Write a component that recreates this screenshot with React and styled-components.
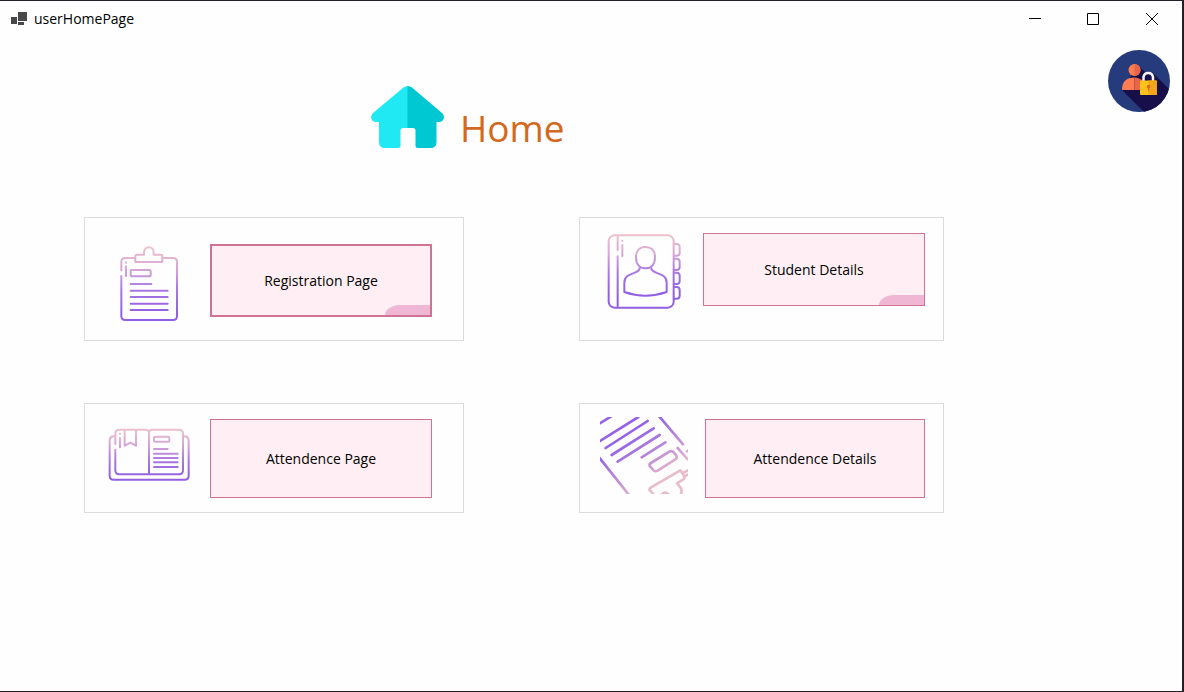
import React from "react";
import styled, { createGlobalStyle } from "styled-components";

const GlobalStyle = createGlobalStyle`
  * { box-sizing: border-box; }
  body {
    margin: 0;
    background: #fefefe;
    font-family: "Open Sans", "Noto Sans", sans-serif;
    color: #000;
  }
`;

const Window = styled.div`
  display: flex;
  flex-direction: column;
  min-height: 100vh;
  background: #fefefe;
  border: solid #232127;
  border-width: 1px 2px 1px 0;
`;

const TitleBar = styled.header`
  display: flex;
  align-items: center;
  height: 36px;
  padding: 0 1px 0 11px;
`;

const TitleText = styled.span`
  flex: 1;
  margin-left: 7px;
  font-size: 14px;
  line-height: 20px;
`;

const CaptionButton = styled.button`
  display: flex;
  align-items: center;
  justify-content: center;
  width: 58px;
  height: 36px;
  padding: 0;
  border: 0;
  background: none;
`;

const Toolbar = styled.div`
  display: flex;
  justify-content: flex-end;
  height: 49px;
  padding: 13px 12px 0 0;
`;

const AccountButton = styled.button`
  width: 62px;
  height: 62px;
  padding: 0;
  border: 0;
  border-radius: 50%;
  background: none;
  svg { display: block; }
`;

const Heading = styled.div`
  display: flex;
  gap: 15px;
  height: 131px;
  padding-left: 371px;
`;

const Title = styled.h1`
  margin: 16px 0 0;
  font-size: 37px;
  line-height: 52px;
  font-weight: 400;
  color: #d2691e;
`;

const Menu = styled.main`
  display: grid;
  grid-template-columns: 380fr 365fr;
  gap: 62px 115px;
  padding: 0 238px 62px 84px;
`;

const Card = styled.section`
  display: flex;
  align-items: flex-start;
  gap: ${(p) => p.$gap || 17}px;
  min-height: ${(p) => p.$height}px;
  padding: ${(p) => p.$top}px ${(p) => p.$right}px 14px 20px;
  border: 1px solid #dcdcdf;
  background: #fefefe;
`;

const CardIcon = styled.svg`
  flex: none;
  width: 88px;
  height: 77px;
  fill: none;
  stroke-width: ${(p) => p.$stroke || 6};
  stroke-linecap: round;
  stroke-linejoin: round;
`;

const PageButton = styled.button`
  position: relative;
  flex: 1;
  height: ${(p) => p.$height}px;
  margin-top: ${(p) => p.$drop || 0}px;
  padding: 0;
  border: ${(p) => (p.$focused ? 2 : 1)}px solid #d07294;
  background: #ffeff4;
  font-family: inherit;
  font-size: 14px;
  line-height: 20px;
  color: #000;
`;

const CornerTab = styled.span`
  position: absolute;
  right: 0;
  bottom: 0;
  width: 45px;
  height: 10px;
  border-top-left-radius: 18px 12px;
  background: #efb7d3;
`;

function Gradient({ id, y1, y2 }) {
  return (
    <linearGradient id={id} gradientUnits="userSpaceOnUse" x1="0" x2="0" y1={y1} y2={y2}>
      <stop offset="0" stopColor="#ecc1cc" />
      <stop offset="0.3" stopColor="#d9a8d6" />
      <stop offset="0.65" stopColor="#a877e0" />
      <stop offset="1" stopColor="#9160e2" />
    </linearGradient>
  );
}

function ClipboardIcon() {
  return (
    <CardIcon viewBox="75 102 264 231" stroke="url(#clipboard)" aria-hidden="true">
      <Gradient id="clipboard" y1={112} y2={310} />
      <path d="M124 181V156Q124 144 136 144H165M247 144H279Q291 144 291 156V319Q291 330 279 330H136Q124 330 124 319V198" />
      <path d="M166 156V139Q166 134 171 134H192V127A14 15 0 0 1 221 127V134H242Q247 134 247 139V156Z" />
      <path d="M138 157V158M138 169V198" />
      <rect x="152" y="180" width="60" height="19" rx="3" />
      <path d="M152 222H214M152 242H263M152 261H263M152 281H263M152 300H263" />
    </CardIcon>
  );
}

function ContactBookIcon() {
  return (
    <CardIcon viewBox="75 69 264 231" stroke="url(#contacts)" aria-hidden="true">
      <Gradient id="contacts" y1={76} y2={250} />
      <rect x="101" y="76" width="195" height="217" rx="18" />
      <path d="M128 77V120M128 139V292M142 92V93M142 105V138" />
      <path d="M211 111C229 111 240 122 240 142C240 163 228 175 211 175C194 175 183 163 183 142C183 122 194 111 211 111Z" />
      <path d="M195 171C195 196 148 184 148 218V246Q211 268 275 246V218C275 184 228 196 228 171" />
      <path d="M297 102H305Q314 102 314 111V128Q314 137 305 137H297M297 146H305Q314 146 314 155V171Q314 180 305 180H297M297 188H305Q314 188 314 197V213Q314 222 305 222H297M297 231H305Q314 231 314 240V257Q314 266 305 266H297" />
    </CardIcon>
  );
}

function OpenBookIcon() {
  return (
    <CardIcon viewBox="75 57 264 231" stroke="url(#book)" aria-hidden="true">
      <Gradient id="book" y1={92} y2={240} />
      <path d="M102 115Q89 115 89 129V233Q89 245 101 245H314Q326 245 326 233V129Q326 115 313 115" />
      <path d="M106 138V107Q106 95 118 95H195Q207 95 207 104Q207 95 219 95H297Q309 95 309 107V217Q309 229 297 229H118Q106 229 106 217V155M207 104V229" />
      <path d="M134 96V143L151 134L168 143V96M120 107V108M120 119V148" />
      <rect x="222" y="116" width="46" height="15" rx="3" />
      <path d="M222 153H263M222 167H293M222 180H293M222 193H293M222 207H293" />
    </CardIcon>
  );
}

function TiltedClipboardIcon() {
  return (
    <CardIcon viewBox="75 57 264 231" $stroke={8} stroke="url(#tilted)" aria-hidden="true">
      <linearGradient id="tilted" gradientUnits="userSpaceOnUse" x1="165" y1="115" x2="255" y2="245">
        <stop offset="0" stopColor="#9562e6" />
        <stop offset="0.3" stopColor="#a878da" />
        <stop offset="0.65" stopColor="#c795d4" />
        <stop offset="1" stopColor="#e8bccc" />
      </linearGradient>
      <path d="M70 79L112 53M70 132L190 57M92 150L218 69M110 171L236 91M128 191L254 111M200 178L271 133" />
      <path d="M72 178L163 292M250 52L324 139M308 150L338 184M336 160L344 156" />
      <path d="M225 205Q221 199 228 195L283 161Q291 157 296 163L304 173Q308 180 300 185L248 218Q241 222 236 217Z" />
      <path d="M238 292L224 276Q222 272 227 269L316 217L327 233Q331 240 325 244L306 256L313 264Q325 276 316 292M322 226L344 214M327 236L344 227M258 292Q267 279 280 288" />
    </CardIcon>
  );
}

function HouseIcon() {
  return (
    <svg width="74" height="63" viewBox="0 0 74 63" aria-hidden="true">
      <path fill="#20e9f4" d="M37 0Q34.500 0 32.500 1.500L2 27Q0 29 0 31.500Q1 36 5 36H8V56Q8 62 14 62H27Q29.500 62 29.500 59.500V44.500Q29.500 42 32 42H37Z" />
      <path fill="#00c8d2" d="M36.500 0Q39 0 41 1.500L71 27Q73.500 29 73 31.500Q72 36 68 36H65.500V56Q65.500 62 59.500 62H47Q44.500 62 44.500 59.500V44.500Q44.500 42 42 42H36.500Z" />
    </svg>
  );
}

function AccountIcon() {
  return (
    <svg width="62" height="62" viewBox="0 0 62 62" aria-hidden="true">
      <clipPath id="disc"><circle cx="31" cy="31" r="31" /></clipPath>
      <g clipPath="url(#disc)">
        <rect width="62" height="62" fill="#263b7b" />
        <path fill="#170f49" d="M14 40L30 15.500L37 22L44 22L66 44V66H40Z" />
        <circle cx="26.500" cy="20" r="6" fill="#ff7d50" />
        <path fill="#ea6548" d="M26.500 14A6 6 0 0 1 26.500 26Z" />
        <path fill="#ff7d50" d="M14 40Q14 27.500 26.500 27.500V40Z" />
        <path fill="#ea6548" d="M26.500 27.500Q31 27.500 35 31V40H26.500Z" />
        <path fill="none" stroke="#f6f4fa" strokeWidth="2.500" d="M35.500 32V27A4.800 4.800 0 0 1 45 27V32" />
        <rect x="32" y="30.500" width="17" height="14.500" rx="1" fill="#fcc21b" />
        <path fill="#f3a51c" d="M40.500 30.500H48Q49 30.500 49 31.500V44Q49 45 48 45H40.500Z" />
        <path fill="#d96a25" d="M40.500 35A1.700 1.700 0 0 1 41.200 38.300L41 41H40L39.800 38.300A1.700 1.700 0 0 1 40.500 35Z" />
      </g>
    </svg>
  );
}

function AppIcon() {
  return (
    <svg width="16" height="16" viewBox="0 0 16 16" aria-hidden="true" fill="#48484a">
      <rect x="7" y="1" width="9" height="9" />
      <rect x="0" y="6" width="6" height="7" />
      <rect x="7" y="11" width="6" height="3" />
    </svg>
  );
}

function CaptionIcon({ d }) {
  return (
    <svg width="14" height="14" viewBox="0 0 14 14" fill="none" stroke="#000" aria-hidden="true">
      <path d={d} />
    </svg>
  );
}

const captions = [
  { label: "Minimize", d: "M0 6.500H12" },
  { label: "Maximize", d: "M0.500 1.500H11.500V12.500H0.500Z" },
  { label: "Close", d: "M1 1L13 13M13 1L1 13" },
];

const pages = [
  { label: "Registration Page", Icon: ClipboardIcon, card: { $height: 124, $top: 26, $right: 31 }, button: { $height: 73, $focused: true }, tab: true },
  { label: "Student Details", Icon: ContactBookIcon, card: { $height: 124, $top: 15, $right: 18, $gap: 15 }, button: { $height: 73 }, tab: true },
  { label: "Attendence Page", Icon: OpenBookIcon, card: { $height: 110, $top: 13, $right: 31 }, button: { $height: 79, $drop: 2 } },
  { label: "Attendence Details", Icon: TiltedClipboardIcon, card: { $height: 110, $top: 13, $right: 18 }, button: { $height: 79, $drop: 2 } },
];

export default function App() {
  return (
    <>
      <GlobalStyle />
      <Window>
        <TitleBar>
          <AppIcon />
          <TitleText>userHomePage</TitleText>
          {captions.map((c) => (
            <CaptionButton key={c.label} type="button" aria-label={c.label}>
              <CaptionIcon d={c.d} />
            </CaptionButton>
          ))}
        </TitleBar>
        <Toolbar>
          <AccountButton type="button" aria-label="Account">
            <AccountIcon />
          </AccountButton>
        </Toolbar>
        <Heading>
          <HouseIcon />
          <Title>Home</Title>
        </Heading>
        <Menu>
          {pages.map(({ label, Icon, card, button, tab }) => (
            <Card key={label} {...card}>
              <Icon />
              <PageButton type="button" {...button}>
                {label}
                {tab && <CornerTab />}
              </PageButton>
            </Card>
          ))}
        </Menu>
      </Window>
    </>
  );
}
